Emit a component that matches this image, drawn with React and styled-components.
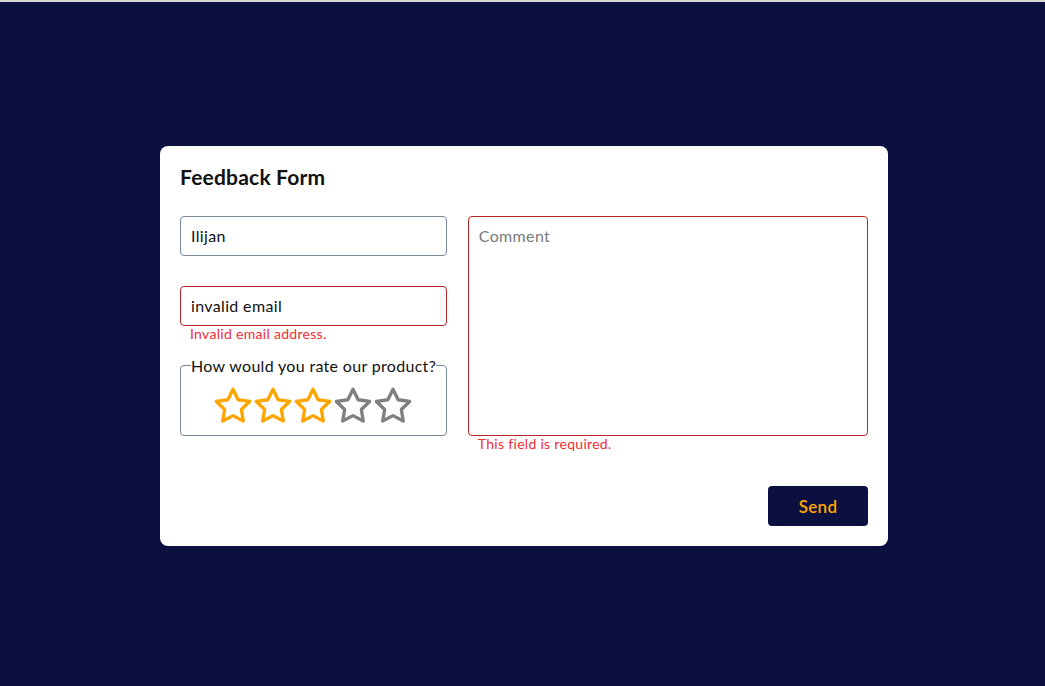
import styled, { createGlobalStyle } from "styled-components";

const GlobalStyle = createGlobalStyle`
  html, body {
    margin: 0;
    padding: 0;
  }

  body {
    font-family: "Lato", "Open Sans", sans-serif;
    background-color: #0c1040;
  }
`;

const Page = styled.div`
  min-height: 100vh;
  box-sizing: border-box;
  border-top: 2px solid #d6d6d6;
  padding: 4px 0 0 3px;
  display: flex;
  align-items: center;
  justify-content: center;
`;

const Card = styled.form`
  width: 728px;
  box-sizing: border-box;
  padding: 20px;
  background: #fff;
  border-radius: 8px;
  display: flex;
  flex-direction: column;
`;

const Title = styled.h2`
  margin: 0 0 26px;
  font-size: 21px;
  line-height: 22px;
  padding-bottom: 2px;
  font-weight: 700;
  letter-spacing: 0.2px;
  color: #111;
`;

const Columns = styled.div`
  display: grid;
  grid-template-columns: 2fr 3fr;
  gap: 21px;
`;

const Column = styled.div`
  display: flex;
  flex-direction: column;
`;

const Field = styled.div`
  display: flex;
  flex-direction: column;
`;

const controlStyles = `
  box-sizing: border-box;
  width: 100%;
  padding: 9px 10px 10px;
  font-family: "Lato", "Open Sans", sans-serif;
  font-size: 16px;
  line-height: 19px;
  letter-spacing: 0.35px;
  color: #111;
  background: #fff;
  border-radius: 4px;
  outline: none;

  &::placeholder {
    color: #7a7a7a;
  }
`;

const Input = styled.input`
  ${controlStyles}
  height: 40px;
  border: 1px solid ${(p) => (p.$invalid ? "#b92424" : "#778899")};
`;

const TextArea = styled.textarea`
  ${controlStyles}
  height: 220px;
  resize: none;
  display: block;
  border: 1px solid ${(p) => (p.$invalid ? "#b92424" : "#778899")};
`;

const ErrorSlot = styled.div`
  min-height: 30px;
  padding-left: 10px;
  box-sizing: border-box;
  font-size: 14px;
  line-height: 16px;
  letter-spacing: 0.3px;
  color: #f22b35;
`;

const RatingSet = styled.fieldset`
  margin: 0;
  padding: 0 6px 0 10px;
  border: 1px solid #778899;
  border-radius: 4px;
  height: 80px;
  box-sizing: border-box;
`;

const Legend = styled.legend`
  padding: 0;
  font-size: 16px;
  line-height: 19px;
  letter-spacing: 0.32px;
  white-space: nowrap;
  color: #111;
`;

const Stars = styled.div`
  display: flex;
  justify-content: center;
  margin: 11px -6px 0 -10px;
`;

const StarIcon = styled.svg`
  width: 40px;
  height: 40px;
  fill: none;
  stroke: ${(p) => (p.$active ? "#ffa500" : "#808080")};
  stroke-width: 2;
  stroke-linejoin: round;
`;

const Footer = styled.div`
  display: flex;
  justify-content: flex-end;
  margin-top: 20px;
`;

const SendButton = styled.button`
  width: 100px;
  height: 40px;
  border: none;
  border-radius: 4px;
  background: #0c1040;
  color: #ffa500;
  font-family: "Lato", "Open Sans", sans-serif;
  font-size: 17px;
  font-weight: 600;
  letter-spacing: 0.3px;
  cursor: pointer;
`;

function Star({ active }) {
  return (
    <StarIcon viewBox="0 0 24 24" $active={active}>
      <polygon points="12,2 15.09,8.26 22,9.27 17,14.14 18.18,21.02 12,17.77 5.82,21.02 7,14.14 2,9.27 8.91,8.26" />
    </StarIcon>
  );
}

export default function App() {
  const rating = 3;

  return (
    <>
      <GlobalStyle />
      <Page>
        <Card onSubmit={(e) => e.preventDefault()}>
          <Title>Feedback Form</Title>
          <Columns>
            <Column>
              <Field>
                <Input type="text" defaultValue="Ilijan" />
                <ErrorSlot />
              </Field>
              <Field>
                <Input type="text" defaultValue="invalid email" $invalid />
                <ErrorSlot>Invalid email address.</ErrorSlot>
              </Field>
              <RatingSet>
                <Legend>How would you rate our product?</Legend>
                <Stars>
                  {[1, 2, 3, 4, 5].map((n) => (
                    <Star key={n} active={n <= rating} />
                  ))}
                </Stars>
              </RatingSet>
            </Column>
            <Column>
              <Field>
                <TextArea placeholder="Comment" $invalid />
                <ErrorSlot>This field is required.</ErrorSlot>
              </Field>
            </Column>
          </Columns>
          <Footer>
            <SendButton type="submit">Send</SendButton>
          </Footer>
        </Card>
      </Page>
    </>
  );
}
